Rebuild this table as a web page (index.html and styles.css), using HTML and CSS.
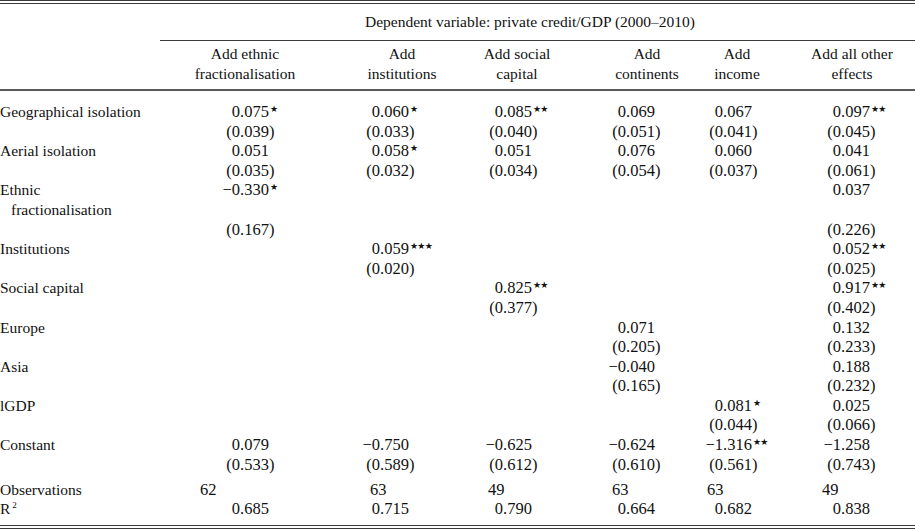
FILE: index.html
```html
<!DOCTYPE html>
<html lang="en">
<head>
<meta charset="utf-8">
<title>Private credit regression table</title>
<link rel="stylesheet" href="styles.css">
</head>
<body>
<div class="table">
  <div class="row head1">
    <div class="lab"></div>
    <div class="span">Dependent variable: private credit/GDP (2000–2010)</div>
  </div>
  <div class="row head2">
    <div class="lab"></div>
    <div class="h">Add ethnic<br>fractionalisation</div>
    <div class="h">Add<br>institutions</div>
    <div class="h">Add social<br>capital</div>
    <div class="h">Add<br>continents</div>
    <div class="h">Add<br>income</div>
    <div class="h">Add all other<br>effects</div>
  </div>
  <div class="body">
    <div class="row">
      <div class="lab">Geographical isolation</div>
      <div class="v"><span class="i">0</span>.075<span class="s">★</span></div>
      <div class="v"><span class="i">0</span>.060<span class="s">★</span></div>
      <div class="v"><span class="i">0</span>.085<span class="s">★★</span></div>
      <div class="v"><span class="i">0</span>.069</div>
      <div class="v"><span class="i">0</span>.067</div>
      <div class="v"><span class="i">0</span>.097<span class="s">★★</span></div>
    </div>
    <div class="row">
      <div class="lab"></div>
      <div class="v"><span class="i">(0</span>.039)</div>
      <div class="v"><span class="i">(0</span>.033)</div>
      <div class="v"><span class="i">(0</span>.040)</div>
      <div class="v"><span class="i">(0</span>.051)</div>
      <div class="v"><span class="i">(0</span>.041)</div>
      <div class="v"><span class="i">(0</span>.045)</div>
    </div>
    <div class="row">
      <div class="lab">Aerial isolation</div>
      <div class="v"><span class="i">0</span>.051</div>
      <div class="v"><span class="i">0</span>.058<span class="s">★</span></div>
      <div class="v"><span class="i">0</span>.051</div>
      <div class="v"><span class="i">0</span>.076</div>
      <div class="v"><span class="i">0</span>.060</div>
      <div class="v"><span class="i">0</span>.041</div>
    </div>
    <div class="row">
      <div class="lab"></div>
      <div class="v"><span class="i">(0</span>.035)</div>
      <div class="v"><span class="i">(0</span>.032)</div>
      <div class="v"><span class="i">(0</span>.034)</div>
      <div class="v"><span class="i">(0</span>.054)</div>
      <div class="v"><span class="i">(0</span>.037)</div>
      <div class="v"><span class="i">(0</span>.061)</div>
    </div>
    <div class="row">
      <div class="lab">Ethnic</div>
      <div class="v"><span class="i">−0</span>.330<span class="s">★</span></div>
      <div class="v"></div>
      <div class="v"></div>
      <div class="v"></div>
      <div class="v"></div>
      <div class="v"><span class="i">0</span>.037</div>
    </div>
    <div class="row">
      <div class="lab indent">fractionalisation</div>
    </div>
    <div class="row">
      <div class="lab"></div>
      <div class="v"><span class="i">(0</span>.167)</div>
      <div class="v"></div>
      <div class="v"></div>
      <div class="v"></div>
      <div class="v"></div>
      <div class="v"><span class="i">(0</span>.226)</div>
    </div>
    <div class="row">
      <div class="lab">Institutions</div>
      <div class="v"></div>
      <div class="v"><span class="i">0</span>.059<span class="s">★★★</span></div>
      <div class="v"></div>
      <div class="v"></div>
      <div class="v"></div>
      <div class="v"><span class="i">0</span>.052<span class="s">★★</span></div>
    </div>
    <div class="row">
      <div class="lab"></div>
      <div class="v"></div>
      <div class="v"><span class="i">(0</span>.020)</div>
      <div class="v"></div>
      <div class="v"></div>
      <div class="v"></div>
      <div class="v"><span class="i">(0</span>.025)</div>
    </div>
    <div class="row">
      <div class="lab">Social capital</div>
      <div class="v"></div>
      <div class="v"></div>
      <div class="v"><span class="i">0</span>.825<span class="s">★★</span></div>
      <div class="v"></div>
      <div class="v"></div>
      <div class="v"><span class="i">0</span>.917<span class="s">★★</span></div>
    </div>
    <div class="row">
      <div class="lab"></div>
      <div class="v"></div>
      <div class="v"></div>
      <div class="v"><span class="i">(0</span>.377)</div>
      <div class="v"></div>
      <div class="v"></div>
      <div class="v"><span class="i">(0</span>.402)</div>
    </div>
    <div class="row">
      <div class="lab">Europe</div>
      <div class="v"></div>
      <div class="v"></div>
      <div class="v"></div>
      <div class="v"><span class="i">0</span>.071</div>
      <div class="v"></div>
      <div class="v"><span class="i">0</span>.132</div>
    </div>
    <div class="row">
      <div class="lab"></div>
      <div class="v"></div>
      <div class="v"></div>
      <div class="v"></div>
      <div class="v"><span class="i">(0</span>.205)</div>
      <div class="v"></div>
      <div class="v"><span class="i">(0</span>.233)</div>
    </div>
    <div class="row">
      <div class="lab">Asia</div>
      <div class="v"></div>
      <div class="v"></div>
      <div class="v"></div>
      <div class="v"><span class="i">−0</span>.040</div>
      <div class="v"></div>
      <div class="v"><span class="i">0</span>.188</div>
    </div>
    <div class="row">
      <div class="lab"></div>
      <div class="v"></div>
      <div class="v"></div>
      <div class="v"></div>
      <div class="v"><span class="i">(0</span>.165)</div>
      <div class="v"></div>
      <div class="v"><span class="i">(0</span>.232)</div>
    </div>
    <div class="row">
      <div class="lab">lGDP</div>
      <div class="v"></div>
      <div class="v"></div>
      <div class="v"></div>
      <div class="v"></div>
      <div class="v"><span class="i">0</span>.081<span class="s">★</span></div>
      <div class="v"><span class="i">0</span>.025</div>
    </div>
    <div class="row">
      <div class="lab"></div>
      <div class="v"></div>
      <div class="v"></div>
      <div class="v"></div>
      <div class="v"></div>
      <div class="v"><span class="i">(0</span>.044)</div>
      <div class="v"><span class="i">(0</span>.066)</div>
    </div>
    <div class="row">
      <div class="lab">Constant</div>
      <div class="v"><span class="i">0</span>.079</div>
      <div class="v"><span class="i">−0</span>.750</div>
      <div class="v"><span class="i">−0</span>.625</div>
      <div class="v"><span class="i">−0</span>.624</div>
      <div class="v"><span class="i">−1</span>.316<span class="s">★★</span></div>
      <div class="v"><span class="i">−1</span>.258</div>
    </div>
    <div class="row">
      <div class="lab"></div>
      <div class="v"><span class="i">(0</span>.533)</div>
      <div class="v"><span class="i">(0</span>.589)</div>
      <div class="v"><span class="i">(0</span>.612)</div>
      <div class="v"><span class="i">(0</span>.610)</div>
      <div class="v"><span class="i">(0</span>.561)</div>
      <div class="v"><span class="i">(0</span>.743)</div>
    </div>
  </div>
  <div class="foot">
    <div class="row obs">
      <div class="lab">Observations</div>
      <div class="v">62</div>
      <div class="v">63</div>
      <div class="v">49</div>
      <div class="v">63</div>
      <div class="v">63</div>
      <div class="v">49</div>
    </div>
    <div class="row">
      <div class="lab">R<sup class="sq">2</sup></div>
      <div class="v"><span class="i">0</span>.685</div>
      <div class="v"><span class="i">0</span>.715</div>
      <div class="v"><span class="i">0</span>.790</div>
      <div class="v"><span class="i">0</span>.664</div>
      <div class="v"><span class="i">0</span>.682</div>
      <div class="v"><span class="i">0</span>.838</div>
    </div>
  </div>
</div>
</body>
</html>
```

FILE: styles.css
```css
html, body {
  margin: 0;
  padding: 0;
  background: #ffffff;
}

body {
  width: 915px;
  height: 531px;
  overflow: hidden;
  font-family: "Liberation Serif", "Times New Roman", serif;
  font-size: 15.5px;
  color: #111111;
}

.table {
  width: 915px;
  border-top: 4px double #3a3a3a;
  border-bottom: 4px double #3a3a3a;
}

.row {
  display: grid;
  grid-template-columns: 160px 163.5px 136px 122.5px 110px 102.5px 120.5px;
  line-height: 19.6px;
  min-height: 19.6px;
}

.lab {
  white-space: nowrap;
}

.lab.indent {
  padding-left: 11px;
}

/* header */
.head1 {
  padding-top: 8px;
}

.head1 .span {
  grid-column: 2 / 8;
  text-align: center;
  padding-right: 15px;
  padding-bottom: 8.4px;
  border-bottom: 1px solid #3a3a3a;
}

.head2 {
  padding-top: 3px;
  padding-bottom: 5.8px;
  border-bottom: 2px solid #5a5a5a;
}

.h {
  text-align: center;
  white-space: nowrap;
}

.head2 .h:nth-child(2) { padding-left: 6.5px; }
.head2 .h:nth-child(3) { padding-left: 21px; }
.head2 .h:nth-child(4) { padding-right: 7.5px; }
.head2 .h:nth-child(5) { padding-left: 20px; }
.head2 .h:nth-child(6) { padding-right: 12.5px; }
.head2 .h:nth-child(7) { padding-right: 5.5px; }

/* body */
.body {
  padding-top: 11px;
}

.foot {
  padding-top: 5.5px;
  padding-bottom: 6px;
}

.v {
  white-space: nowrap;
  font-size: 16.5px;
  padding-left: var(--pad);
}

.row > :nth-child(2) { --pad: 62px;   --obs: 40px; }
.row > :nth-child(3) { --pad: 38.5px; --obs: 46.5px; }
.row > :nth-child(4) { --pad: 25.5px; --obs: 28.5px; }
.row > :nth-child(5) { --pad: 26px;   --obs: 30px; }
.row > :nth-child(6) { --pad: 13px;   --obs: 15px; }
.row > :nth-child(7) { --pad: 28.5px; --obs: 27.5px; }

.obs .v {
  padding-left: var(--obs);
}

.i {
  display: inline-block;
  width: 18px;
  text-align: right;
}

.s {
  font-family: "DejaVu Sans", sans-serif;
  font-size: 9px;
  vertical-align: 5px;
  letter-spacing: -0.6px;
  margin-left: 1px;
  line-height: 0;
}

.sq {
  font-size: 9px;
  vertical-align: 6px;
  line-height: 0;
  margin-left: 2px;
}
```
